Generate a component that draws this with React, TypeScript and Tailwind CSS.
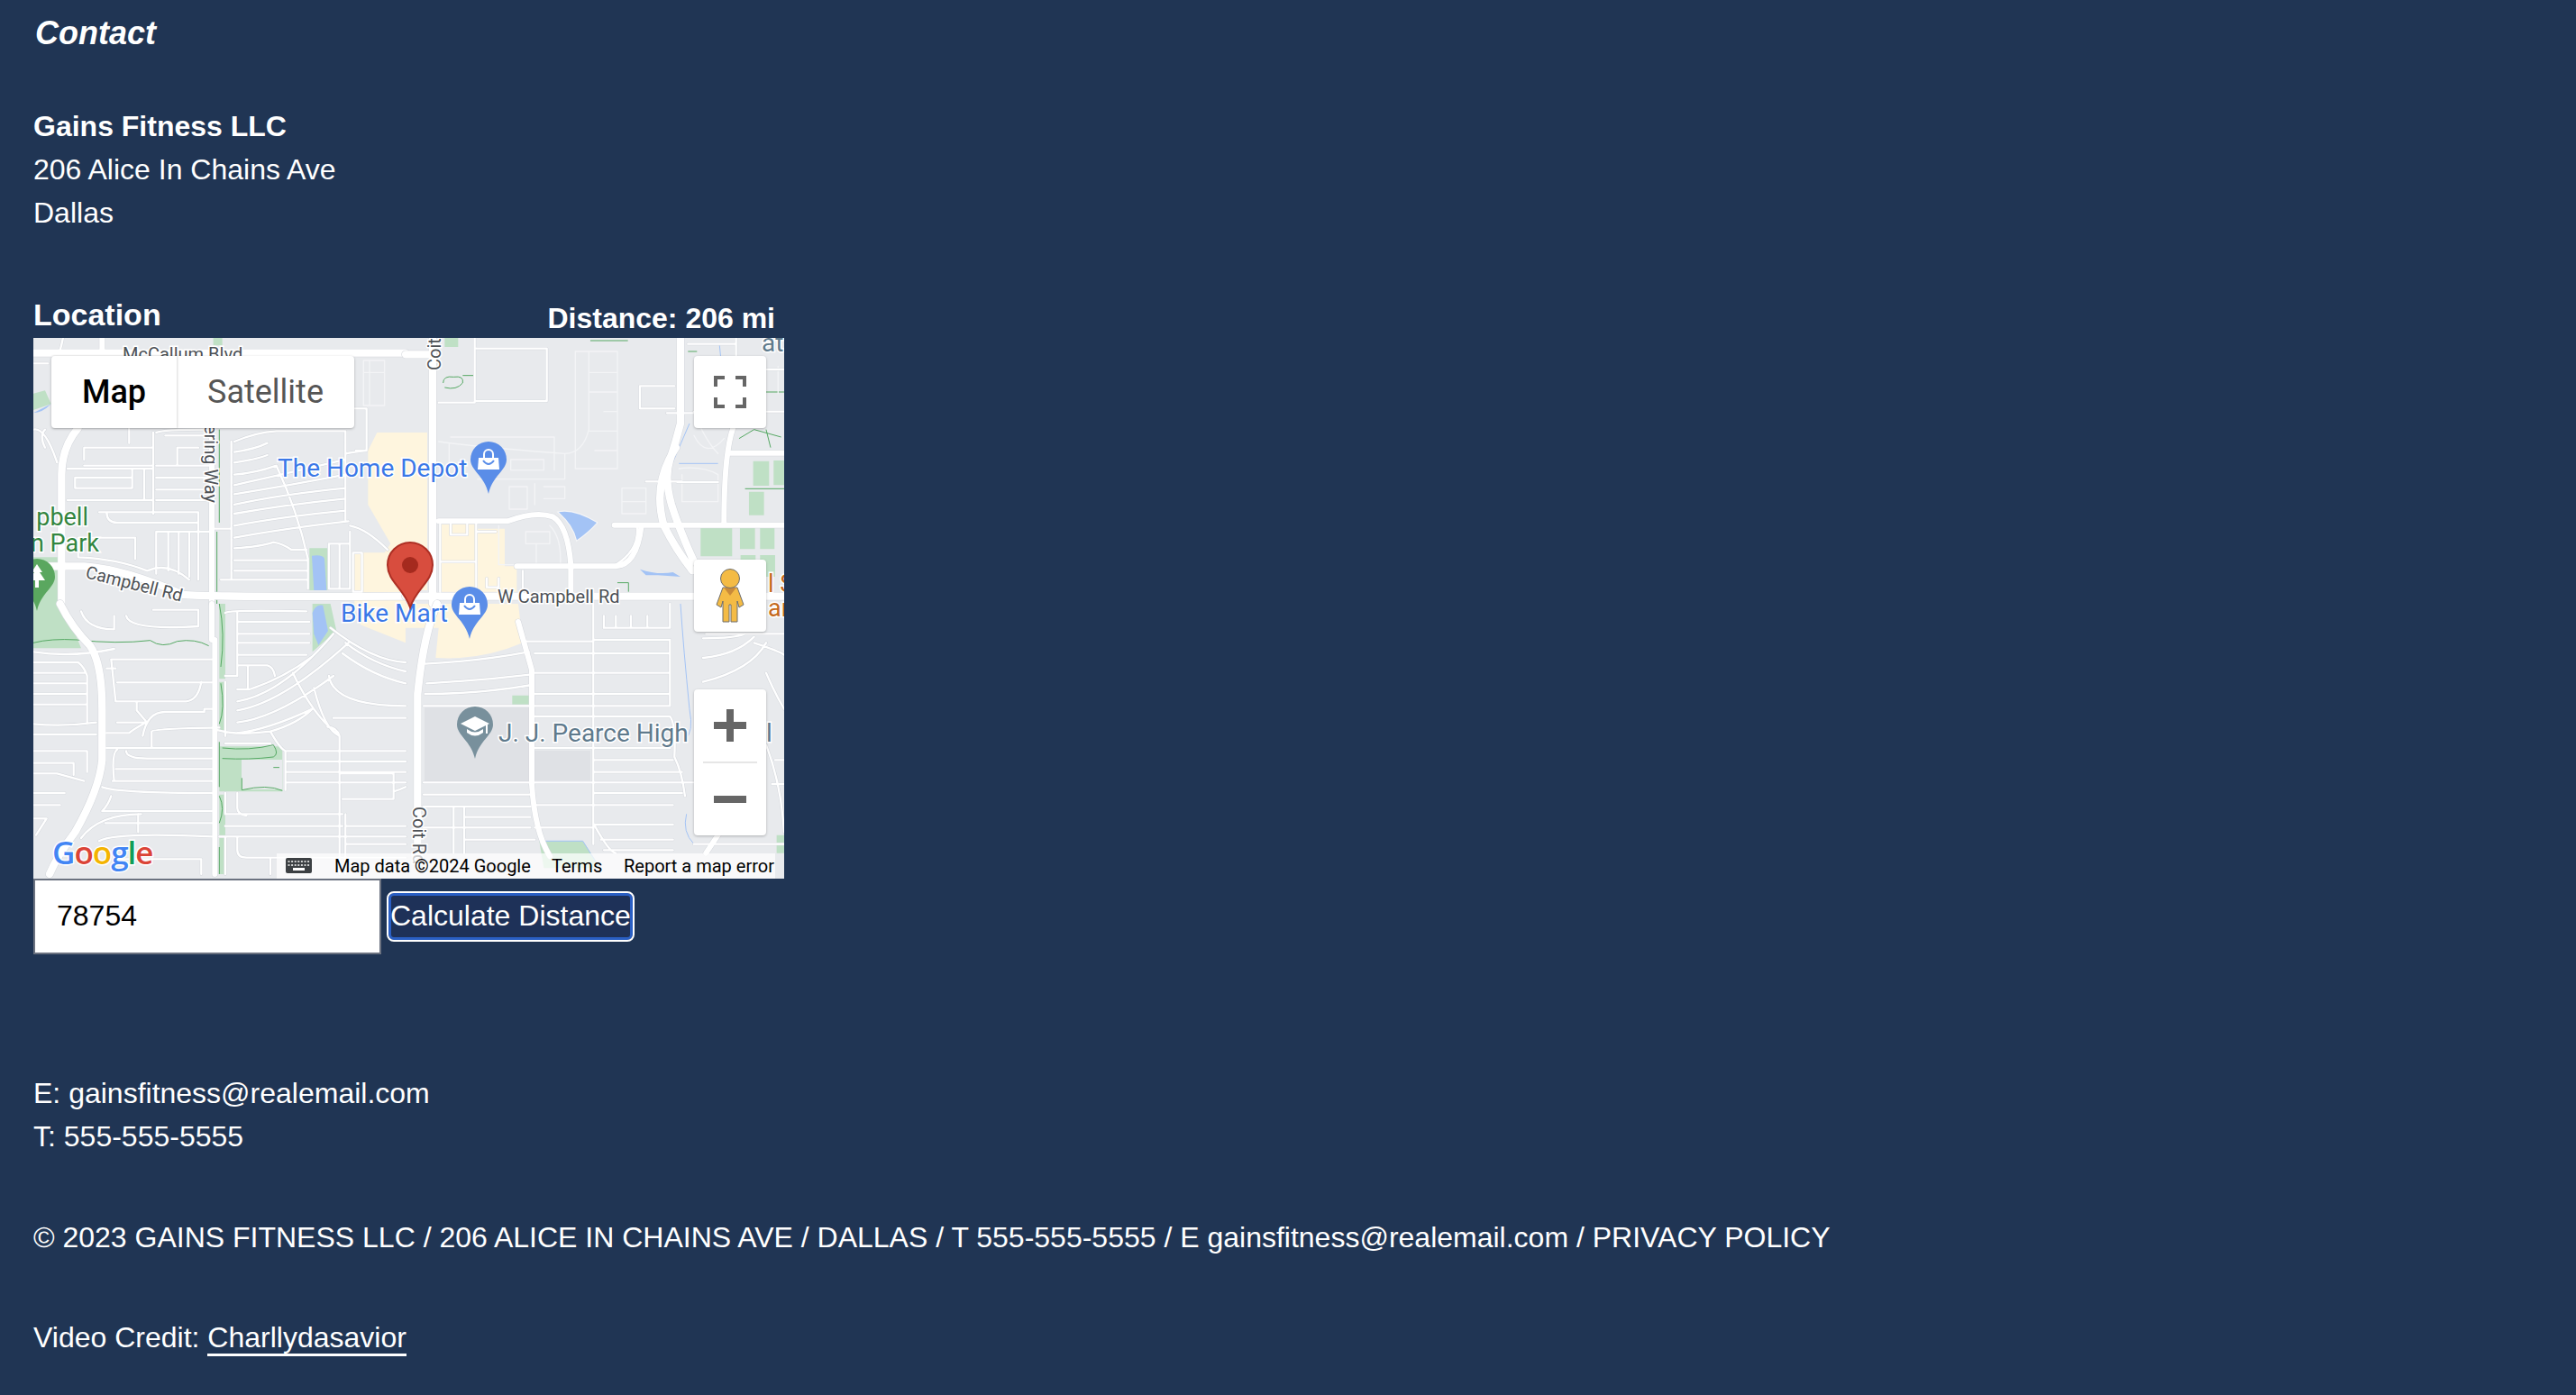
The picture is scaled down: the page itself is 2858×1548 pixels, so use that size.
import React from 'react'

// each list is traced from one quarter of the map, in 3x pixels of that quarter
type Quarter = { x: number; y: number; lane?: string; minor: string; mid: string; major: string }

const quarters: Quarter[] = [
  {
    x: -7,
    y: -5,
    major: 'M21 65H1260 M170 315Q115 380 115 470V900 M21 775H190Q330 785 520 870Q600 878 1260 875',
    mid: 'M615 320V900 M250 14V60',
    lane: 'M1120 90H1190V240H1120Z M1120 130H1190 M1140 90V240',
    minor:
      'M21 100H70 M120 14Q115 40 110 55 M21 320Q60 310 100 430 M60 320Q40 340 60 380 M190 420V380H420V440 M190 440H420 M135 450H420 M350 450V515H160V480H350 M420 330V600 M135 555H420 M390 450V555 M500 440V380H570 M430 440H610 M430 480H610 M430 520H610 M430 555H610 M240 595H570V820 M265 595Q265 630 300 630H570 M430 660H610 M430 660V800 M470 665V790 M505 665V800 M540 665V810 M170 680H360V750 M170 680V745Q300 750 400 790 M400 790Q470 760 540 820 M340 315V365 M430 330Q450 320 600 320 M460 340H590 M625 650H680V820H920 M645 820H930 M680 360V790 M690 360Q760 330 830 325H1060V410 M690 395Q760 385 800 365 M690 430Q760 420 800 405 M690 505Q850 470 1060 420 M690 470Q760 465 830 440 M690 535Q850 510 1060 470 M690 570Q850 535 1060 515 M690 600Q860 570 1060 550 M690 640Q850 610 1060 590 M690 680Q850 650 1070 625 M690 715Q780 710 820 695Q850 700 880 720H930 M690 755H930 M690 790H930 M830 440Q900 590 935 750V850 M1075 660V850H1005V700H1075 M1040 700V850 M1060 340V620 M1085 730V860H1115V730Z M1060 250H1130V390H1095 M1060 400Q1120 390 1130 390 M1075 640Q1130 650 1200 720',
  },
  {
    x: 413,
    y: -5,
    major: 'M0 70H90 M90 0V900 M915 0V300Q900 360 880 420Q860 480 885 570Q910 650 960 760 M900 380Q820 500 860 640Q900 720 955 790 M0 875H1260',
    mid: 'M110 625H340Q430 590 490 610Q540 640 550 770V860 M370 775H700Q770 770 785 640 M695 638H1260 M1090 315Q1060 400 1060 630 M1080 398H1260',
    lane:
      'M565 60H705V450H565Z M610 60V320 M610 130H705 M610 195H705 M660 260H705 M610 325H705 M630 390H705 M720 515H800V600H720Z M720 560H800 M110 360Q250 380 530 400Q590 400 610 320 M150 345H495V455 M145 365V440 M350 420H460V455H350Z M530 400V485H240 M345 510H405V585H345Z M430 500V570 M460 510H530V550H460 M310 640V770H530 M400 660H480V700H400Z M435 700V770 M480 640Q520 680 515 770 M910 450Q990 440 1040 470V560H920V470 M960 340Q1000 420 1060 350 M1240 110V200 M960 265Q1000 360 1040 400',
    minor:
      'M230 50H470V225H230Z M110 230H230 M230 14V50 M780 175H895 M780 175V250H895 M870 265H960 M115 635V860 M235 630V860 M115 760H235 M150 635V670H205V635 M235 660H300 M270 815V845H310V815 M390 860V790 M555 860V785 M770 640Q780 720 700 770 M940 35H1100V75 M905 495H1040 M800 493H920 M1100 15V75 M1200 120H1260 M960 260H1260',
  },
  {
    x: -7,
    y: 295,
    major: 'M110 0Q150 80 210 140Q250 200 250 350V520Q240 620 160 760Q100 840 75 900',
    mid: 'M615 0V120 M625 120V900',
    minor:
      'M180 25Q200 85 290 85V40 M330 40Q340 90 570 75V20H420 M21 160Q150 180 290 150 M21 195H170Q190 210 200 240V400 M21 230H195 M21 265H195 M21 300H195 M21 335H195 M21 400Q120 410 230 395 M21 435H230 M21 490H200V560 M21 530H155V570 M21 565H100L190 590 M21 630H125 M21 670H110 M21 715H65L30 770 M280 185H615 M280 185L295 325H530Q570 320 580 260 M300 262H615 M265 215H295 M365 325V355L395 390 M300 395H395Q350 420 340 430H265 M385 440Q400 360 460 360H590V350H615 M415 480V425Q420 415 640 412 M265 480H615 M330 490Q330 515 400 515H615 M295 550H615 M285 590H615 M290 590Q280 500 300 485 M250 610Q300 630 615 630 M280 640Q270 670 250 690H615 M370 700V760 M260 730H615 M180 780Q240 700 380 700 M240 790Q290 760 615 775 M300 850H580V900 M630 420Q700 440 810 425Q900 400 950 350 M660 260V440 M660 30Q660 20 930 25 M700 60H940 M700 25V240H660 M700 100H940 M700 130H940 M700 170H930 M700 205H800Q820 210 825 240 M735 205V285 M700 285H740Q850 250 950 175 M700 325Q850 300 1020 100 M700 355Q850 330 1070 130 M700 395Q830 380 1020 240 M700 430Q800 420 950 350 M885 230Q950 370 1040 440V900 M1010 80Q1150 190 1260 195 M1050 165Q1150 240 1260 265 M1060 130Q1150 200 1260 225 M1005 240Q1020 340 1260 340 M955 280Q990 420 1040 440 M1020 380H1260 M1000 410Q1030 410 1040 440 M810 425Q840 480 860 490V620 M660 465H810 M865 490H1260 M865 525H1260 M865 560H1260 M865 595H1260 M1045 565H1220V650H1050 M1220 625Q1240 620 1260 610 M660 630V700H1050 M700 630V680Q700 700 730 705 M660 740H1050 M640 775H1260 M700 775V820Q700 845 730 845H1260 M660 775V900 M810 850V900 M1060 700V900 M1060 740H1260 M1060 800H1260',
  },
  {
    x: 413,
    y: 295,
    major: 'M105 0Q60 100 40 300V800',
    mid: 'M375 60Q395 130 420 220V600Q430 760 480 840 M1040 770Q1020 800 1000 830',
    minor:
      'M65 200Q250 190 410 160 M70 265Q250 255 420 235 M65 300Q250 300 420 270 M60 340H420 M400 125H625 M430 165H880 M430 230H880 M430 300H880 M430 340H880V120H625 M625 0V800 M660 40V80H880V0 M700 40V80 M750 40V80 M805 40V80 M425 375H880Q900 400 895 510Q920 560 930 640 M430 480H880 M630 520H890 M630 560H920 M60 595H960 M60 635H415 M630 630H920 M60 675H415 M630 670H890 M60 745H415 M630 735H890 M430 670H620 M430 745H620 M160 680V830 M195 680V830 M200 710H415 M200 785H430 M630 740Q680 830 700 830 M650 785H890 M660 820H890 M990 115Q1100 115 1130 100 M990 180Q1100 170 1160 110 M990 260Q1150 220 1200 130 M1000 100H1260 M1200 230Q1230 300 1260 350 M1160 130Q1250 160 1260 170 M1200 470Q1250 600 1260 760 M1230 520H1260 M1220 600H1260 M960 800H1260',
  },
]

const parks = [
  { q: 0, d: 'M21 745H110V900H21Z M940 715H1000V855H940Z M21 200L60 190L80 235L21 255Z M620 14H650V40H620Z' },
  { q: 1, d: 'M130 14H175V45H130Z M1157 425H1210V507H1157Z M1225 423H1260V505H1225Z M1143 527H1193V605H1143Z M982 637H1087V742H982Z M1113 642H1163V718H1113Z M1180 642H1228V718H1180Z M1115 738H1165V790H1115Z M1180 738H1230V810H1180Z' },
  { q: 2, d: 'M21 0H120L180 148H21Z M640 0H660V250H640Z M640 260H660V420H640Z M640 475H850V625H640Z M640 635H660V900H640Z M950 0H1010L1030 90L950 160Z' },
  { q: 3, d: 'M355 305H415V335H355Z M445 790H590L650 880H460Z M1235 770H1260V830H1235Z' },
]

const trails = [
  { q: 0, d: 'M640 320V630 M632 660V900 M190 140H228 M125 160Q130 140 160 148H190' },
  { q: 1, d: 'M615 24H740 M190 140H228 M125 165Q125 140 160 145Q195 140 190 165Q170 190 130 180 M940 60H970 M1110 350L1160 320L1250 345 M1200 195H1260 M1130 517H1260 M705 830H742V860 M1200 320L1215 380' },
  { q: 2, d: 'M21 130Q80 115 165 120Q300 135 410 122Q450 150 500 125Q560 115 605 140 M640 0Q660 100 645 210 M645 265Q660 350 640 400 M650 480Q740 490 820 470Q840 500 820 510Q740 520 650 515 M715 580V620Q800 600 850 622 M820 545H840 M640 460V610 M640 640Q660 680 640 730 M640 810V900' },
]

const waters = [
  { q: 0, d: 'M948 740Q985 735 990 750L997 855H955Z M21 265Q50 265 80 235' },
  { q: 1, d: 'M780 785Q840 805 890 795L915 810L840 805L800 805Z' },
  { q: 2, d: 'M950 30Q960 0 985 5L1002 90L970 138L955 100Z' },
]

const waterLines = [
  { q: 1, d: 'M910 433H1040 M945 300Q880 450 860 500Q880 620 940 730 M1045 40L1050 90' },
  { q: 3, d: 'M915 0Q925 150 945 350 Q960 430 930 450 M935 700Q920 760 960 800 M445 790H590L640 870' },
]

const beiges = [
  { q: 0, d: 'M1165 330H1260V900H1090V730H1190L1210 700L1135 570V390Z' },
  { q: 1, d: 'M0 330H72V855H0Z M115 635H230V760H115Z M235 650H330V775H370V860H115V765H235Z' },
  { q: 2, d: 'M1110 70L1260 130V0H1090Z' },
  { q: 3, d: 'M0 0H375L390 130Q250 190 100 180L110 80H0Z' },
]

function Pin({ x, y, fill, r = 20, children }: { x: number; y: number; fill: string; r?: number; children?: React.ReactNode }) {
  return (
    <g transform={`translate(${x},${y})`}>
      <path
        fill={fill}
        d={`M0 ${-r}A${r} ${r} 0 0 1 ${r} 0C${r} ${r * 0.6} ${r * 0.22} ${r * 0.9} 0 ${r * 1.9}C${-r * 0.22} ${r * 0.9} ${-r} ${r * 0.6} ${-r} 0A${r} ${r} 0 0 1 0 ${-r}Z`}
      />
      {children}
    </g>
  )
}

function ShopGlyph() {
  return (
    <g>
      <path fill="#fff" d="M-11 -2H11L12 11H-12Z" />
      <path fill="none" stroke="#fff" strokeWidth="2" d="M-5 -2V-6A5 5 0 0 1 5 -6V-2" />
      <path fill="none" stroke="#5a8de8" strokeWidth="2" d="M-6 1Q0 9 6 1" />
    </g>
  )
}

function Label({ x, y, size, fill, rotate, halo = 3, anchor, children }: { x: number; y: number; size: number; fill: string; rotate?: number; halo?: number; anchor?: 'end'; children: React.ReactNode }) {
  return (
    <text
      x={rotate ? 0 : x}
      y={rotate ? 0 : y}
      transform={rotate ? `translate(${x},${y}) rotate(${rotate})` : undefined}
      fontSize={size}
      fill={fill}
      stroke="#fff"
      strokeWidth={halo}
      paintOrder="stroke"
      textAnchor={anchor}
    >
      {children}
    </text>
  )
}

function MapDrawing() {
  const layer = (items: { q: number; d: string }[], props: React.SVGProps<SVGPathElement>) =>
    items.map(it => <path key={it.q} transform={`translate(${quarters[it.q].x},${quarters[it.q].y}) scale(0.3333)`} d={it.d} {...props} />)

  return (
    <svg viewBox="0 0 833 600" className="block h-full w-full font-[Roboto,sans-serif]">
      <rect width="833" height="600" fill="#e8eaed" />
      {layer(beiges, { fill: '#fef5de' })}
      {layer(parks, { fill: '#bfe0c5' })}
      <rect x="434" y="410" width="118" height="83" fill="#dfe1e5" />
      <rect x="555" y="458" width="63" height="33" fill="#dfe1e5" />
      <rect x="231" y="468" width="45" height="33" fill="#e8eaed" />
      {layer(waters, { fill: '#a3c3f5' })}
      {layer(waterLines, { fill: 'none', stroke: '#a3c3f5', strokeWidth: 3 })}
      {layer(trails, { fill: 'none', stroke: '#54a862', strokeWidth: 3 })}
      {quarters.map((q, i) => (
        <g key={i} transform={`translate(${q.x},${q.y}) scale(0.3333)`} fill="none" strokeLinecap="round" strokeLinejoin="round">
          {q.lane && <path d={q.lane} stroke="#f3f4f6" strokeWidth="4" />}
          <path d={q.minor} stroke="#d4d7dc" strokeWidth="10" />
          <path d={q.mid} stroke="#d4d7dc" strokeWidth="21" />
          <path d={q.major} stroke="#d4d7dc" strokeWidth="28" />
          <path d={q.minor} stroke="#fff" strokeWidth="7" />
          <path d={q.mid} stroke="#fff" strokeWidth="18" />
          <path d={q.major} stroke="#fff" strokeWidth="25" />
        </g>
      ))}
      {/* lake sits over the ring road with its own white edge */}
      <path
        transform="translate(413,-5) scale(0.3333)"
        d="M510 595Q560 585 636 630Q610 660 570 688Q560 640 510 595Z"
        fill="#a3c3f5"
        stroke="#f4f5f7"
        strokeWidth="7"
        paintOrder="stroke"
      />

      <Label x={99} y={25} size={20} fill="#4d5156">McCallum Blvd</Label>
      <Label x={190} y={183} size={20} fill="#4d5156" rotate={90} anchor="end">Bering Way</Label>
      <Label x={452} y={36} size={20} fill="#4d5156" rotate={-90}>Coit</Label>
      <Label x={421} y={520} size={20} fill="#4d5156" rotate={90}>Coit Rd</Label>
      <Label x={57} y={266} size={19.5} fill="#4d5156" rotate={14}>Campbell Rd</Label>
      <Label x={515} y={294} size={20} fill="#4d5156">W Campbell Rd</Label>
      <Label x={271} y={154} size={28} fill="#3b78e7">The Home Depot</Label>
      <Label x={341} y={315} size={28} fill="#3b78e7">Bike Mart</Label>
      <Label x={61} y={208} size={27} fill="#33853f" anchor="end">pbell</Label>
      <Label x={73} y={237} size={27} fill="#33853f" anchor="end">n Park</Label>
      <Label x={516} y={448} size={28} fill="#5f7a8c">J. J. Pearce High</Label>
      <Label x={813} y={448} size={28} fill="#5f7a8c">l</Label>
      <Label x={808} y={15} size={28} fill="#5f7a8c">at</Label>
      <Label x={815} y={282} size={27} fill="#c5691c">l S</Label>
      <Label x={815} y={309} size={27} fill="#c5691c">ar</Label>

      <Pin x={4} y={265} fill="#5aa75f" r={20}>
        <path fill="#fff" d="M0 -14L6 -5H3L9 4H2V12H-2V4H-9L-3 -5H-6Z" />
      </Pin>
      <Pin x={505} y={135} fill="#5a8de8">
        <ShopGlyph />
      </Pin>
      <Pin x={484} y={296} fill="#5a8de8">
        <ShopGlyph />
      </Pin>
      <Pin x={490} y={429} fill="#78909c">
        <path fill="#fff" d="M0 -9L16 -1L0 7L-16 -1Z" />
        <path fill="#fff" d="M-9 5Q0 12 9 5V9Q0 16 -9 9Z" />
        <rect x="12" y="-1" width="2" height="11" fill="#fff" />
      </Pin>

      <g transform="translate(418,252)">
        <path fill="#d84d3e" stroke="#ad2f24" strokeWidth="2" d="M0 -25A25 25 0 0 1 25 0C25 18 7 26 0 47C-7 26 -25 18 -25 0A25 25 0 0 1 0 -25Z" />
        <circle r="9" fill="#a52a1e" />
      </g>

      <rect x="270" y="572" width="553" height="28" fill="#fff" fillOpacity="0.72" />
      <g transform="translate(280,577)">
        <rect width="29" height="17" rx="2" fill="#3c4043" />
        <path stroke="#fff" strokeWidth="1.6" strokeDasharray="2 1.6" d="M2.5 4H27 M2.5 8H27" />
        <rect x="8" y="11" width="13" height="3" fill="#fff" />
      </g>
      <g fontSize="20" fill="#000">
        <text x={334} y={593}>Map data ©2024 Google</text>
        <text x={575} y={593}>Terms</text>
        <text x={655} y={593}>Report a map error</text>
      </g>

      <text x={21} y={584} fontSize={35} fontFamily="Open Sans" fontWeight={600} stroke="#fff" strokeWidth={3} paintOrder="stroke" letterSpacing={-1}>
        <tspan fill="#4285f4">G</tspan>
        <tspan fill="#db4437">o</tspan>
        <tspan fill="#f4b400">o</tspan>
        <tspan fill="#4285f4">g</tspan>
        <tspan fill="#0f9d58">l</tspan>
        <tspan fill="#db4437">e</tspan>
      </text>
    </svg>
  )
}

function ControlBox({ className, children }: { className: string; children: React.ReactNode }) {
  return <div className={`absolute flex bg-white rounded-[4px] shadow-[0_1px_3px_rgba(0,0,0,0.25)] ${className}`}>{children}</div>
}

function MapEmbed() {
  return (
    <div className="relative h-[600px] w-[833px] overflow-hidden">
      <MapDrawing />

      <ControlBox className="left-5 top-5 h-20 w-[336px] font-[Roboto,sans-serif] text-[36px]">
        <div className="flex w-[139px] items-center justify-center font-medium text-black shadow-[1px_0_2px_rgba(0,0,0,0.15)]">Map</div>
        <div className="flex flex-1 items-center justify-center text-[#565656]">Satellite</div>
      </ControlBox>

      <ControlBox className="right-5 top-5 h-20 w-20 items-center justify-center">
        <svg viewBox="0 0 36 36" className="h-9 w-9" fill="none" stroke="#666" strokeWidth="4">
          <path d="M12 2H2V12 M24 2H34V12 M2 24V34H12 M34 24V34H24" />
        </svg>
      </ControlBox>

      <ControlBox className="right-5 top-[246px] h-20 w-20 items-center justify-center">
        <svg viewBox="0 0 40 60" className="h-[60px] w-10">
          <path fill="#f4bb45" stroke="#6d6d6d" strokeWidth="1" d="M12 21H28L35 40L30 43L28 36V59H21V40H19V59H12V36L10 43L5 40Z" />
          <path fill="#c98a3a" d="M13 21H27L20 30Z" />
          <circle cx="20" cy="11" r="10.5" fill="#f4bb45" stroke="#6d6d6d" strokeWidth="1" />
        </svg>
      </ControlBox>

      <ControlBox className="right-5 top-[390px] h-[162px] w-20 flex-col items-center">
        <div className="flex h-[80px] w-full items-center justify-center">
          <svg viewBox="0 0 36 36" className="h-9 w-9" fill="#666">
            <path d="M14 0H22V14H36V22H22V36H14V22H0V14H14Z" />
          </svg>
        </div>
        <div className="h-0.5 w-[60px] bg-[#e6e6e6]" />
        <div className="flex h-[80px] w-full items-center justify-center">
          <svg viewBox="0 0 36 8" className="h-2 w-9" fill="#666">
            <rect width="36" height="8" />
          </svg>
        </div>
      </ControlBox>
    </div>
  )
}

export default function App() {
  return (
    <div className="h-[1548px] overflow-hidden bg-[#203554] pl-[37px] font-['Liberation_Sans',sans-serif] text-[32px] leading-[48px] text-white">
      <h2 className="ml-[2px] pt-[10px] text-[36px] leading-[54px] font-bold italic">Contact</h2>

      <div className="mt-[52px]">
        <p className="font-bold">Gains Fitness LLC</p>
        <p>206 Alice In Chains Ave</p>
        <p>Dallas</p>
      </div>

      <div className="mt-[60px] w-[833px]">
        <div className="flex h-[55px] items-end justify-between pr-[10px]">
          <h3 className="text-[34px] leading-[51px] font-bold">Location</h3>
          <span className="leading-[44px] font-bold">Distance: 206 mi</span>
        </div>
        <MapEmbed />
        <div className="flex items-center gap-[6px]">
          <input
            readOnly
            value="78754"
            className="h-[84px] w-[386px] border-2 border-[#6b7280] bg-white pb-[2px] pl-6 text-black outline-none"
          />
          <button className="h-14 rounded-[8px] border-2 border-white bg-[#1e3158] px-[2px] pb-[2px] whitespace-nowrap text-white shadow-[inset_0_0_0_3px_#2a5fc4]">
            Calculate Distance
          </button>
        </div>
      </div>

      <div className="mt-[130px]">
        <p>E: gainsfitness@realemail.com</p>
        <p>T: 555-555-5555</p>
      </div>

      <p className="mt-[64px]">© 2023 GAINS FITNESS LLC / 206 ALICE IN CHAINS AVE / DALLAS / T 555-555-5555 / E gainsfitness@realemail.com / PRIVACY POLICY</p>

      <p className="mt-[63px]">
        Video Credit: <a className="border-b-[3px] border-white">Charllydasavior</a>
      </p>
    </div>
  )
}
